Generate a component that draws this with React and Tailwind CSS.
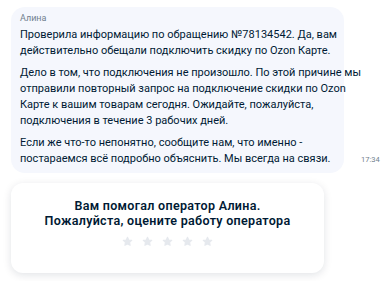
import React from 'react';

const paragraphs = [
  ['Проверила информацию по обращению №78134542. Да, вам', 'действительно обещали подключить скидку по Ozon Карте.'],
  [
    'Дело в том, что подключения не произошло. По этой причине мы',
    'отправили повторный запрос на подключение скидки по Ozon',
    'Карте к вашим товарам сегодня. Ожидайте, пожалуйста,',
    'подключения в течение 3 рабочих дней.',
  ],
  ['Если же что-то непонятно, сообщите нам, что именно -', 'постараемся всё подробно объяснить. Мы всегда на связи.'],
];

const Star = () => (
  <svg width="11" height="11" viewBox="0 0 24 24" className="text-[#e6e9ee]">
    <path
      fill="currentColor"
      stroke="currentColor"
      strokeWidth="2.5"
      strokeLinejoin="round"
      d="M12 2.8l2.8 5.9 6.4.8-4.7 4.4 1.2 6.4L12 17.2l-5.7 3.1 1.2-6.4-4.7-4.4 6.4-.8z"
    />
  </svg>
);

export default function App() {
  return (
    <div
      className="w-[389px] h-[281px] bg-white overflow-hidden pt-[7px] pl-[11px]"
      style={{ fontFamily: 'Roboto, "Noto Sans", sans-serif' }}
    >
      {/* operator message */}
      <div className="w-[333px] h-[166px] rounded-[14px] bg-[#f5f7fd] pl-[9px] pr-[8px] pt-[5px]">
        <div className="text-[9px] leading-[12px] text-[#707f8d]">Алина</div>
        <div className="flex items-end mt-[3px]">
          <div className="text-[11px] leading-[16px] text-[#001a34] flex flex-col gap-[6px] whitespace-nowrap">
            {paragraphs.map((lines, i) => (
              <p key={i}>
                {lines.map((l, j) => (
                  <React.Fragment key={j}>
                    {j > 0 && <br />}
                    {l}
                  </React.Fragment>
                ))}
              </p>
            ))}
          </div>
          <span className="ml-auto text-[7.5px] leading-[12px] text-[#707f8d] mb-[1px]">17:34</span>
        </div>
      </div>

      {/* rating card */}
      <div className="mt-[10px] w-[313px] h-[90px] rounded-[12px] bg-white shadow-[0_2px_8px_rgba(0,26,52,0.12)] flex flex-col items-center pt-[15px]">
        <div className="text-[12.5px] leading-[15px] font-semibold tracking-[0.3px] text-[#001a34] text-center">
          Вам помогал оператор Алина.
          <br />
          Пожалуйста, оцените работу оператора
        </div>
        <div className="flex gap-[9px] mt-[8px]">
          {[0, 1, 2, 3, 4].map((i) => (
            <Star key={i} />
          ))}
        </div>
      </div>
    </div>
  );
}
